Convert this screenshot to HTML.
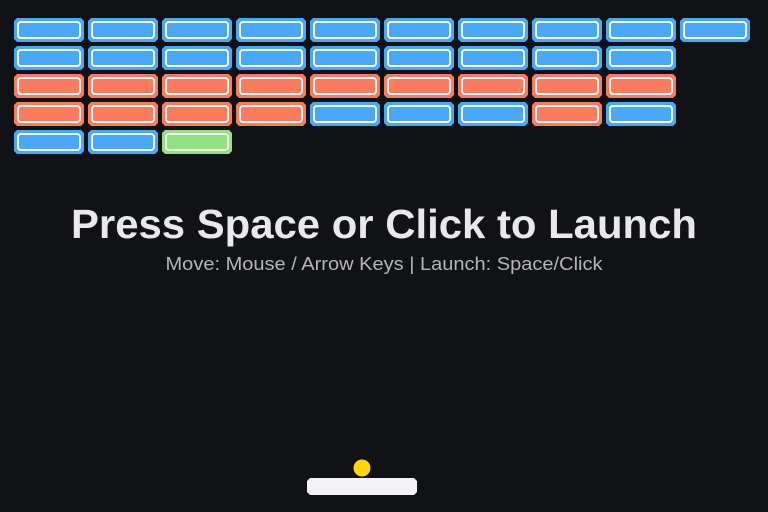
<!DOCTYPE html>
<html><head><meta charset="utf-8"><style>
html,body{margin:0;padding:0;background:#111216;width:768px;height:512px;overflow:hidden}
</style></head><body>
<svg width="768" height="512" viewBox="0 0 768 512" xmlns="http://www.w3.org/2000/svg">
<rect width="768" height="512" fill="#111216"/>
<defs>
<g id="b"><path d="M3 0H67L70 3V21L67 24H3L0 21V3Z"/><rect x="4" y="4" width="62" height="16" rx="3" fill="none" stroke="#f5f5ff" stroke-width="2"/></g>
</defs>
<g id="bricks"></g>
<text x="384" y="238" text-anchor="middle" font-family="Liberation Sans, sans-serif" font-weight="bold" font-size="41" fill="#e8e8ee" textLength="626" lengthAdjust="spacingAndGlyphs">Press Space or Click to Launch</text>
<text x="384" y="270" text-anchor="middle" font-family="Liberation Sans, sans-serif" font-size="18" fill="#b4b4bc" textLength="437" lengthAdjust="spacingAndGlyphs">Move: Mouse / Arrow Keys | Launch: Space/Click</text>
<circle cx="362" cy="468" r="8.5" fill="#ffd60a"/>
<path d="M310 478H414L417 481V492L414 495H310L307 492V481Z" fill="#f4f4f8"/>
</svg>
<script>
var rows=["BBBBBBBBBB","BBBBBBBBB","RRRRRRRRR","RRRRBBBRB","BBG"];
var col={B:"#4aa8f8",R:"#fb7b5a",G:"#93e27d"};
var g=document.getElementById("bricks"),s="";
rows.forEach(function(r,i){for(var j=0;j<r.length;j++){s+='<use href="#b" x="'+(14+74*j)+'" y="'+(18+28*i)+'" fill="'+col[r[j]]+'"/>';}});
g.innerHTML=s;
</script>
</body></html>
